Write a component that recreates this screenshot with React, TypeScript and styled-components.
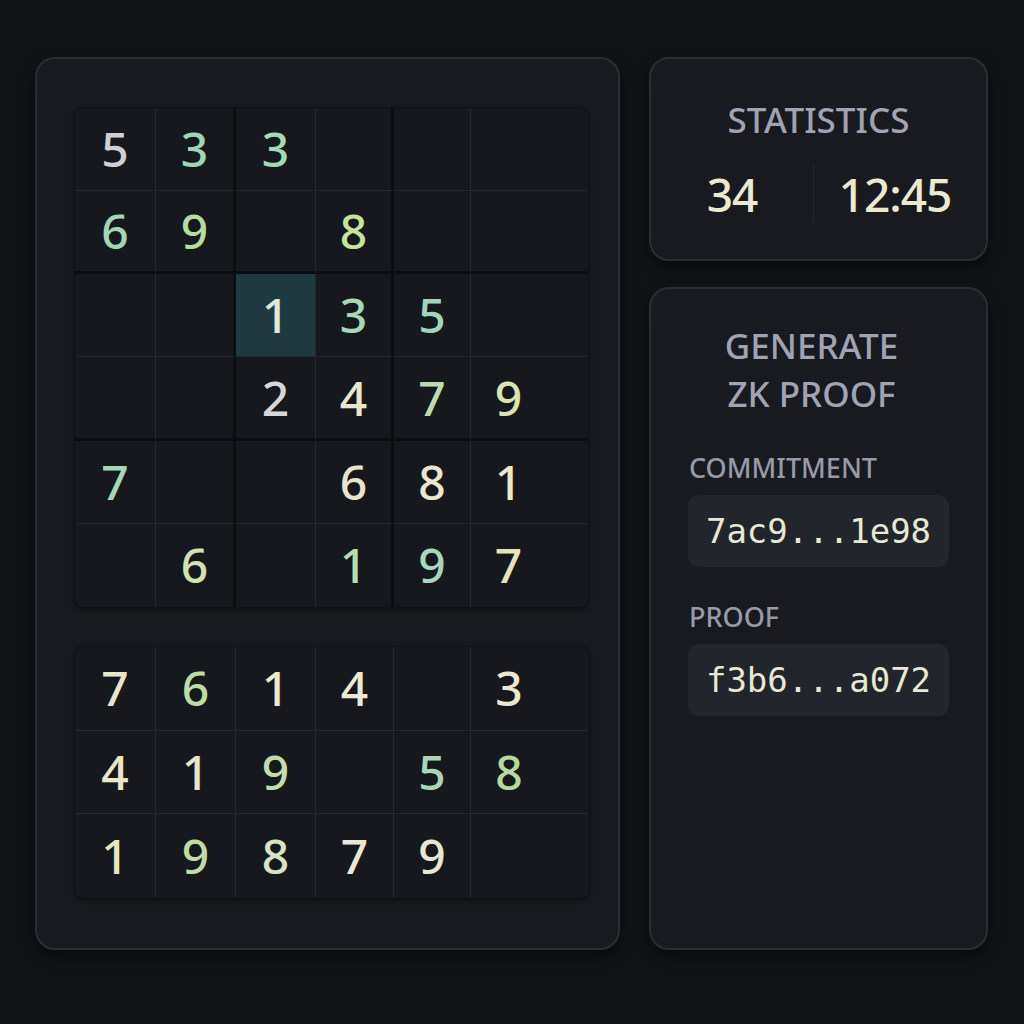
import React from "react";
import styled, { createGlobalStyle } from "styled-components";

const GlobalStyle = createGlobalStyle`
  html, body {
    margin: 0;
    padding: 0;
    background: #111317;
  }
  body {
    font-family: "Noto Sans", "DejaVu Sans", sans-serif;
  }
  * { box-sizing: border-box; }
`;

const Page = styled.div`
  width: 1024px;
  height: 1024px;
  background: #111317;
  display: flex;
  align-items: flex-start;
  gap: 29px;
  padding: 57px 0 0 35px;
`;

const Panel = styled.div`
  background: #181a1f;
  border: 2px solid #2a2d33;
  border-radius: 20px;
  box-shadow: 0 6px 14px rgba(0, 0, 0, 0.45);
`;

const BoardPanel = styled(Panel)`
  width: 585px;
  height: 893px;
  padding: 48px 0 0 37px;
  display: flex;
  flex-direction: column;
  gap: 38px;
`;

const SideColumn = styled.div`
  width: 339px;
  display: flex;
  flex-direction: column;
  gap: 26px;
`;

const Grid = styled.div<{ $rows: number; $height: number; $width: number }>`
  width: ${(p) => p.$width}px;
  height: ${(p) => p.$height}px;
  display: grid;
  grid-template-columns: 81px 80px 80px 78px 77px 1fr;
  grid-template-rows: repeat(${(p) => p.$rows}, 1fr);
  background: #15171c;
  border: 1px solid #101115;
  border-radius: 9px;
  overflow: hidden;
  box-shadow: 0 2px 4px rgba(0, 0, 0, 0.35);
`;

const Cell = styled.div<{
  $thickRight?: boolean;
  $thickBottom?: boolean;
  $lastCol?: boolean;
  $lastRow?: boolean;
  $wide?: boolean;
  $active?: boolean;
}>`
  display: flex;
  align-items: center;
  justify-content: center;
  padding-right: ${(p) => (p.$wide ? "42px" : "0")};
  background: ${(p) => (p.$active ? "#1e3a40" : "#16181d")};
  border-right: ${(p) =>
    p.$lastCol ? "none" : p.$thickRight ? "3px solid #0c0d10" : "1px solid #24272d"};
  border-bottom: ${(p) =>
    p.$lastRow ? "none" : p.$thickBottom ? "3px solid #0c0d10" : "1px solid #24272d"};
  font-family: "Noto Sans", "DejaVu Sans", sans-serif;
  font-size: 48px;
  font-weight: 500;
  line-height: 1;
`;

const Digit = styled.span<{ $color: string }>`
  color: ${(p) => p.$color};
`;

const StatsCard = styled(Panel)`
  height: 204px;
  padding-top: 37px;
  display: flex;
  flex-direction: column;
  align-items: center;
`;

const CardTitle = styled.div<{ $shift?: number }>`
  color: #a0a3b4;
  font-family: "Noto Sans", "DejaVu Sans", sans-serif;
  font-size: 35px;
  font-weight: 500;
  line-height: 48px;
  text-align: center;
  padding-right: ${(p) => p.$shift ?? 0}px;
`;

const StatsRow = styled.div`
  width: 100%;
  margin-top: 21px;
  padding-right: 10px;
  display: flex;
  align-items: center;
`;

const StatValue = styled.div`
  flex: 1;
  text-align: center;
  color: #ece8d2;
  font-family: "Noto Sans", "DejaVu Sans", sans-serif;
  font-size: 46px;
  font-weight: 500;
  letter-spacing: -1px;
  line-height: 1;
`;

const Divider = styled.div`
  width: 1px;
  height: 58px;
  background: #25282e;
`;

const ProofCard = styled(Panel)`
  height: 663px;
  padding: 33px 37px 0 37px;
  display: flex;
  flex-direction: column;
`;

const FieldLabel = styled.div<{ $top: number }>`
  margin-top: ${(p) => p.$top}px;
  color: #9799a8;
  font-family: "Noto Sans", "DejaVu Sans", sans-serif;
  font-size: 27px;
  font-weight: 500;
  line-height: 27px;
  padding-left: 1px;
`;

const ValueBox = styled.div`
  margin-top: 14px;
  height: 72px;
  border-radius: 11px;
  background: #22252b;
  display: flex;
  align-items: center;
  justify-content: center;
  color: #e9e7d6;
  font-family: "DejaVu Sans Mono", "Liberation Mono", monospace;
  font-size: 34px;
  line-height: 1;
`;

type C = [string, string] | null;

const topBoard: C[][] = [
  [["5", "#cfd0d6"], ["3", "#9fd6b6"], ["3", "#a4d9b8"], null, null, null],
  [["6", "#a2d6b8"], ["9", "#b6dc9e"], null, ["8", "#c6e29c"], null, null],
  [null, null, ["1", "#e0e8de"], ["3", "#a8d8b6"], ["5", "#a2d6bc"], null],
  [null, null, ["2", "#d6d7db"], ["4", "#e8e6ce"], ["7", "#bcdcb0"], ["9", "#dbe4b0"]],
  [["7", "#a8d6b6"], null, null, ["6", "#e8e4d0"], ["8", "#ece5d2"], ["1", "#ece8c6"]],
  [null, ["6", "#d2e2b2"], null, ["1", "#b6dcb0"], ["9", "#a6d6bc"], ["7", "#e6e2ba"]],
];

const bottomBoard: C[][] = [
  [["7", "#e8e6c8"], ["6", "#bcdca4"], ["1", "#ece8d2"], ["4", "#ece8d2"], null, ["3", "#ece6d2"]],
  [["4", "#ece6c8"], ["1", "#e8e6ce"], ["9", "#c2dcaa"], null, ["5", "#a8d6b6"], ["8", "#b2da9a"]],
  [["1", "#e6e6c2"], ["9", "#c0dca4"], ["8", "#d8e2c6"], ["7", "#ece6d4"], ["9", "#e8e6d4"], null],
];

function Board({
  data,
  height,
  width,
  blocks,
  active,
}: {
  data: C[][];
  height: number;
  width: number;
  blocks: boolean;
  active?: [number, number];
}) {
  return (
    <Grid $rows={data.length} $height={height} $width={width}>
      {data.map((row, r) =>
        row.map((cell, c) => (
          <Cell
            key={`${r}-${c}`}
            $thickRight={blocks && (c === 1 || c === 3)}
            $thickBottom={blocks && (r === 1 || r === 3)}
            $lastCol={c === row.length - 1}
            $lastRow={r === data.length - 1}
            $wide={c === row.length - 1}
            $active={!!active && active[0] === r && active[1] === c}
          >
            {cell && <Digit $color={cell[1]}>{cell[0]}</Digit>}
          </Cell>
        ))
      )}
    </Grid>
  );
}

export default function App() {
  return (
    <>
      <GlobalStyle />
      <Page>
        <BoardPanel>
          <Board data={topBoard} height={501} width={515} blocks active={[2, 2]} />
          <Board data={bottomBoard} height={253} width={516} blocks={false} />
        </BoardPanel>
        <SideColumn>
          <StatsCard>
            <CardTitle>STATISTICS</CardTitle>
            <StatsRow>
              <StatValue>34</StatValue>
              <Divider />
              <StatValue>12:45</StatValue>
            </StatsRow>
          </StatsCard>
          <ProofCard>
            <CardTitle $shift={14}>
              GENERATE
              <br />
              ZK PROOF
            </CardTitle>
            <FieldLabel $top={36}>COMMITMENT</FieldLabel>
            <ValueBox>7ac9...1e98</ValueBox>
            <FieldLabel $top={36}>PROOF</FieldLabel>
            <ValueBox>f3b6...a072</ValueBox>
          </ProofCard>
        </SideColumn>
      </Page>
    </>
  );
}
